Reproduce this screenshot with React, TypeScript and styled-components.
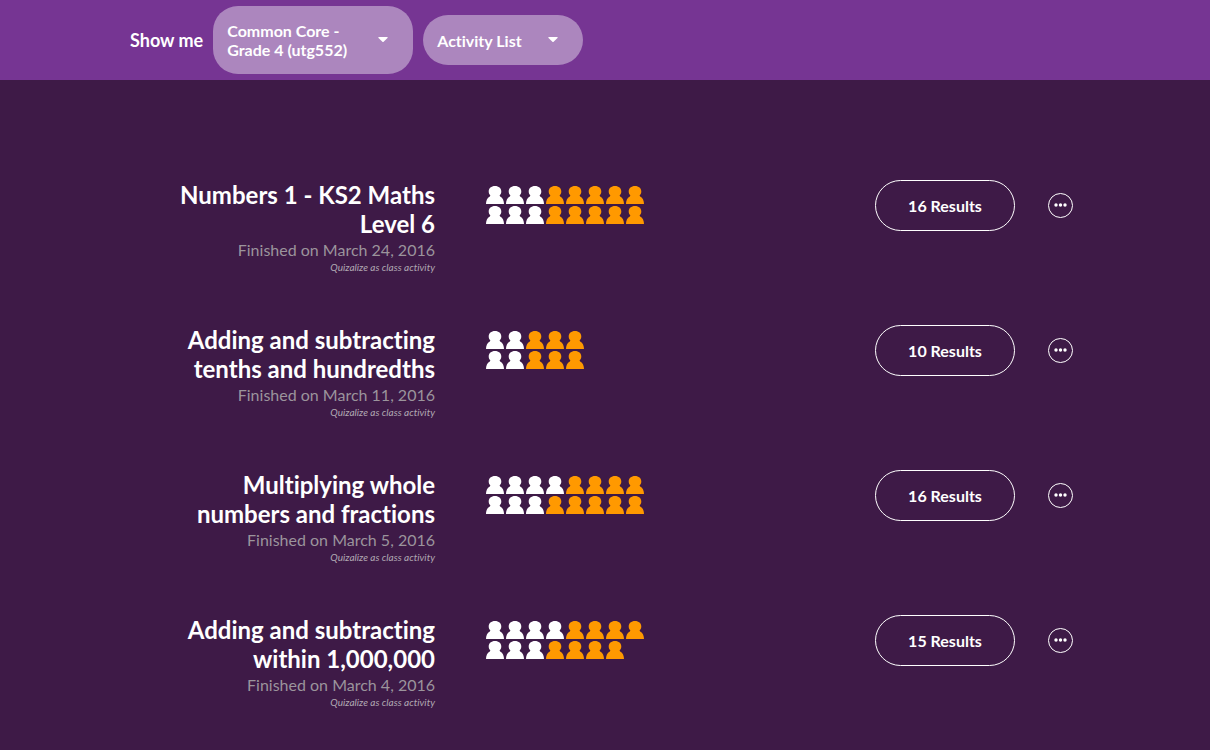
import React, { useState } from "react";
import styled, { createGlobalStyle } from "styled-components";

const GlobalStyle = createGlobalStyle`
  * { box-sizing: border-box; }
  body {
    margin: 0;
    background: #3e1a47;
    color: #fff;
    font-family: Lato, "Liberation Sans", sans-serif;
    font-variant-ligatures: none;
  }
`;

const Bar = styled.header`
  background: #763593;
`;

const Filters = styled.form`
  display: flex;
  align-items: center;
  gap: 10px;
  max-width: 970px;
  min-height: 80px;
  margin: 0 auto;
  padding: 6px 10px;
`;

const Prompt = styled.span`
  font-size: 18px;
  font-weight: 700;
  white-space: nowrap;
`;

const Pill = styled.label<{ $width: number }>`
  position: relative;
  display: flex;
  align-items: center;
  justify-content: space-between;
  width: ${(p) => p.$width}px;
  min-height: 50px;
  padding: 15px 25px 15px 14px;
  border-radius: 25px;
  background: #ac86be;
  font-size: 16px;
  font-weight: 700;
  line-height: 19px;
`;

const PillText = styled.span`
  max-width: 125px;
`;

const NativeSelect = styled.select`
  position: absolute;
  inset: 0;
  width: 100%;
  opacity: 0;
  cursor: pointer;
  font: inherit;
`;

const List = styled.main`
  max-width: 970px;
  margin: 0 auto;
  padding: 100px 17px 0 45px;
`;

const Row = styled.article`
  display: grid;
  grid-template-columns: 270px minmax(211px, 1fr) 198px;
  align-items: start;
  min-height: 145px;
`;

const Summary = styled.div`
  padding-left: 8px;
  text-align: right;
`;

const Title = styled.h2`
  margin: 0;
  font-size: 24px;
  font-weight: 700;
  line-height: 29px;
`;

const Finished = styled.p`
  margin: 2px 0 0;
  color: #9b949c;
  font-size: 16px;
  line-height: 20px;
`;

const Mode = styled.p`
  margin: 0;
  color: #b0a8b2;
  font-size: 10px;
  font-style: italic;
  line-height: 14px;
`;

const People = styled.div`
  display: grid;
  gap: 2px;
  margin: 6px 0 0 51px;
`;

const StudentLine = styled.div`
  display: flex;
  gap: 2px;
`;

const Actions = styled.div`
  display: flex;
  justify-content: space-between;
`;

const ResultsButton = styled.button`
  width: 140px;
  height: 51px;
  padding: 0;
  border: 1px solid #fff;
  border-radius: 26px;
  background: transparent;
  color: #fff;
  font: 700 16px/19px Lato, "Liberation Sans", sans-serif;
  cursor: pointer;
`;

const MoreButton = styled.button`
  display: flex;
  align-items: center;
  justify-content: center;
  width: 25px;
  height: 25px;
  margin-top: 13px;
  padding: 0;
  border: 1px solid #fff;
  border-radius: 50%;
  background: transparent;
  cursor: pointer;
`;

const Person = ({ color }: { color: string }) => (
  <svg width="18" height="18" viewBox="0 0 18 18" fill={color} aria-hidden="true">
    <path d="M9 0C12.8 0 15.3 2.3 15.3 5.4C15.3 7.1 14.6 8.3 13.8 9.3C13.5 9.8 13.7 10.1 14.2 10.4C16.8 11.8 18 14.5 18 18H0C0 14.5 1.2 11.8 3.8 10.4C4.3 10.1 4.5 9.8 4.2 9.3C3.4 8.3 2.7 7.1 2.7 5.4C2.7 2.3 5.2 0 9 0Z" />
  </svg>
);

const Caret = () => (
  <svg width="10" height="6" viewBox="0 0 10 6" fill="#fff" aria-hidden="true">
    <path d="M.7 0H9.3Q10 .2 9.5 .9L5.6 4.8Q5 5.3 4.4 4.8L.5 .9Q0 .2 .7 0Z" />
  </svg>
);

const Dots = () => (
  <svg width="13" height="5" viewBox="0 0 13 5" fill="#fff" aria-hidden="true">
    <circle cx="2" cy="2" r="1.7" />
    <circle cx="6.5" cy="2" r="1.7" />
    <circle cx="11" cy="2" r="1.7" />
  </svg>
);

interface DropdownProps {
  name: string;
  width: number;
  options: string[];
}

function Dropdown({ name, width, options }: DropdownProps) {
  const [value, setValue] = useState(options[0]);
  return (
    <Pill $width={width}>
      <PillText aria-hidden="true">{value}</PillText>
      <Caret />
      <NativeSelect aria-label={name} value={value} onChange={(e) => setValue(e.target.value)}>
        {options.map((option) => (
          <option key={option}>{option}</option>
        ))}
      </NativeSelect>
    </Pill>
  );
}

// Each string is a line of students: "w" is white, "o" is orange.
const activities = [
  { title: "Numbers 1 - KS2 Maths Level 6", date: "March 24, 2016", students: ["wwwooooo", "wwwooooo"] },
  { title: "Adding and subtracting tenths and hundredths", date: "March 11, 2016", students: ["wwooo", "wwooo"] },
  { title: "Multiplying whole numbers and fractions", date: "March 5, 2016", students: ["wwwwoooo", "wwwooooo"] },
  { title: "Adding and subtracting within 1,000,000", date: "March 4, 2016", students: ["wwwwoooo", "wwwoooo"] },
];

export default function App() {
  return (
    <>
      <GlobalStyle />
      <Bar>
        <Filters>
          <Prompt>Show me</Prompt>
          <Dropdown name="Class" width={200} options={["Common Core - Grade 4 (utg552)"]} />
          <Dropdown name="View" width={160} options={["Activity List"]} />
        </Filters>
      </Bar>
      <List>
        {activities.map(({ title, date, students }) => (
          <Row key={title}>
            <Summary>
              <Title>{title}</Title>
              <Finished>Finished on {date}</Finished>
              <Mode>Quizalize as class activity</Mode>
            </Summary>
            <People>
              {students.map((line, i) => (
                <StudentLine key={i}>
                  {line.split("").map((s, j) => (
                    <Person key={j} color={s === "w" ? "#fff" : "#ff9900"} />
                  ))}
                </StudentLine>
              ))}
            </People>
            <Actions>
              <ResultsButton type="button">{students.join("").length} Results</ResultsButton>
              <MoreButton type="button" aria-label="More options">
                <Dots />
              </MoreButton>
            </Actions>
          </Row>
        ))}
      </List>
    </>
  );
}
